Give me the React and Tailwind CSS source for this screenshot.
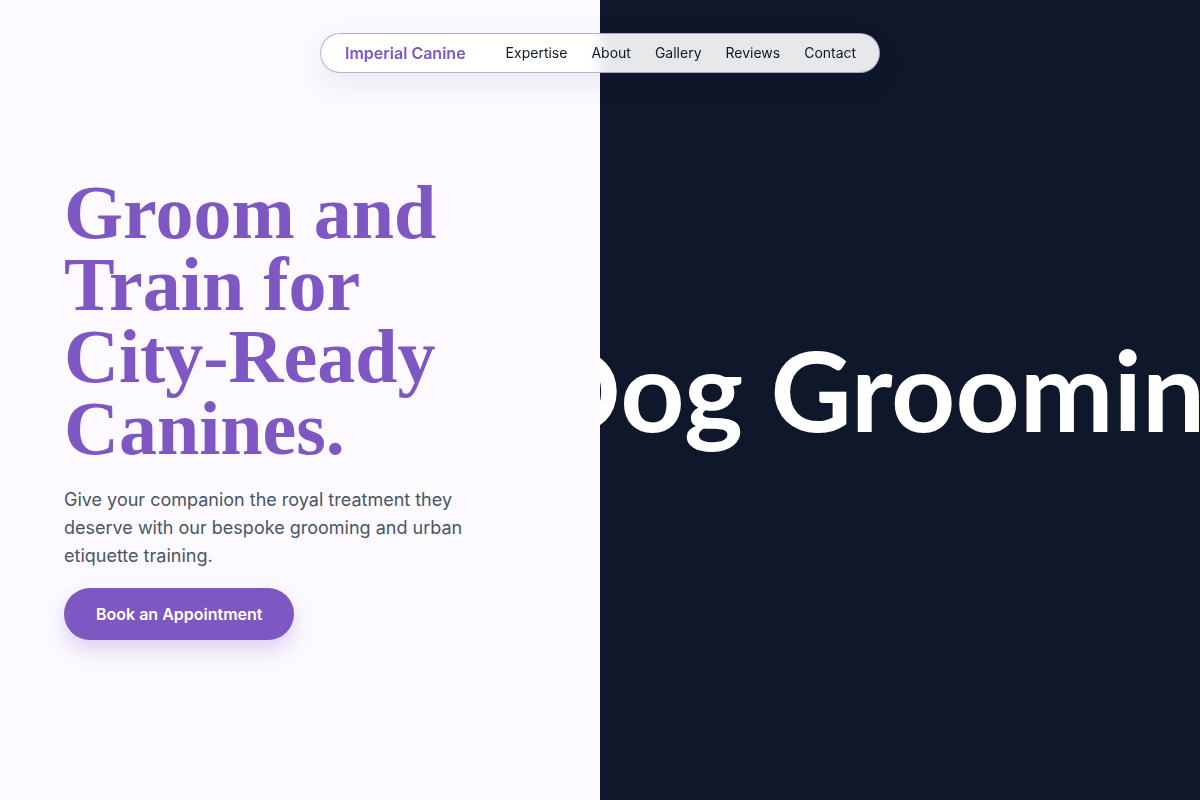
import React from 'react';

const links = ['Expertise', 'About', 'Gallery', 'Reviews', 'Contact'];

const Nav = () => (
  <nav className="fixed top-[33px] left-1/2 -translate-x-1/2 z-20 h-10 w-[560px] flex items-center px-6 rounded-full border border-[#7e57c2]/50 bg-white/90 backdrop-blur shadow-[0_10px_30px_rgba(30,20,60,0.08)]">
    <span className="shrink-0 whitespace-nowrap text-base font-semibold text-[#7e57c2] mr-10">Imperial Canine</span>
    <ul className="flex items-center gap-6 text-sm text-gray-900 whitespace-nowrap">
      {links.map(link => (
        <li key={link}><a href="#">{link}</a></li>
      ))}
    </ul>
  </nav>
);

const Hero = () => (
  <section className="relative z-10 w-[600px] h-full bg-[#fcfaff] flex flex-col justify-center pl-16 pt-4">
    <h1 className="font-['Liberation_Serif',serif] font-bold text-[76px] leading-[72px] text-[#7e57c2]">
      <span className="block">Groom and</span>
      <span className="block">Train for</span>
      <span className="block">City-Ready</span>
      <span className="block">Canines.</span>
    </h1>
    <p className="mt-[22px] w-[420px] text-lg leading-7 text-gray-600">
      Give your companion the royal treatment they deserve with our bespoke grooming and urban etiquette training.
    </p>
    <div className="mt-[18px]">
      <button className="h-[52px] px-8 rounded-full bg-[#7e57c2] text-white font-semibold text-base shadow-[0_10px_20px_rgba(126,87,194,0.25)]">
        Book an Appointment
      </button>
    </div>
  </section>
);

const Showcase = () => (
  <section className="flex-1 h-full bg-[#0f172a] overflow-hidden flex items-center justify-center pb-[22px]">
    <span className="font-['Lato',sans-serif] font-bold text-[112px] text-white whitespace-nowrap">Dog Grooming</span>
  </section>
);

export default function App() {
  return (
    <div className="w-[1200px] h-[800px] flex overflow-hidden font-['Inter',sans-serif]">
      <Nav />
      <Hero />
      <Showcase />
    </div>
  );
}
